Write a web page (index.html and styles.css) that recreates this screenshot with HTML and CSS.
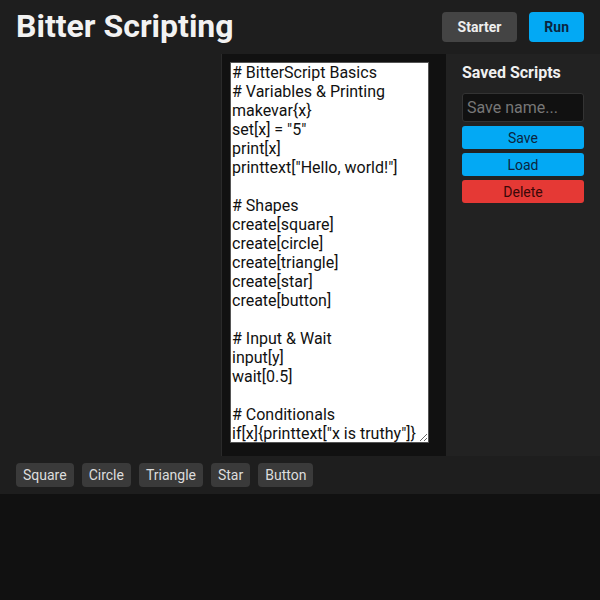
FILE: index.html
```html
<!DOCTYPE html>
<html>
<head>
<meta charset="utf-8">
<link rel="stylesheet" href="styles.css">
</head>
<body>
<header class="topbar">
  <h1 class="title">Bitter Scripting</h1>
  <div class="actions">
    <button class="btn btn-gray">Starter</button>
    <button class="btn btn-blue">Run</button>
  </div>
</header>
<main class="main">
  <section class="canvas"></section>
  <section class="editor">
<textarea class="code" spellcheck="false"># BitterScript Basics
# Variables &amp; Printing
makevar{x}
set[x] = "5"
print[x]
printtext["Hello, world!"]

# Shapes
create[square]
create[circle]
create[triangle]
create[star]
create[button]

# Input &amp; Wait
input[y]
wait[0.5]

# Conditionals
if[x]{printtext["x is truthy"]}</textarea>
  </section>
  <aside class="sidebar">
    <h2 class="side-title">Saved Scripts</h2>
    <input class="name-input" type="text" placeholder="Save name...">
    <button class="sbtn sbtn-blue">Save</button>
    <button class="sbtn sbtn-blue">Load</button>
    <button class="sbtn sbtn-red">Delete</button>
  </aside>
</main>
<nav class="toolbar">
  <button class="tbtn">Square</button>
  <button class="tbtn">Circle</button>
  <button class="tbtn">Triangle</button>
  <button class="tbtn">Star</button>
  <button class="tbtn">Button</button>
</nav>
<section class="output"></section>
</body>
</html>
```
FILE: styles.css
```css
* { box-sizing: border-box; }
html, body { height: 100%; }
body {
  margin: 0;
  background: #111;
  font-family: Roboto, "Liberation Sans", sans-serif;
  color: #eee;
  display: flex;
  flex-direction: column;
}
.topbar {
  height: 54px;
  background: #1e1e1e;
  display: flex;
  align-items: center;
  justify-content: space-between;
  padding: 0 16px;
}
.title {
  margin: 0;
  font-size: 32px;
  font-weight: 700;
  color: #f2f2f2;
  position: relative;
  top: -1px;
}
.actions { display: flex; gap: 12px; }
.btn {
  border: none;
  border-radius: 4px;
  font-family: inherit;
  font-size: 14px;
  font-weight: 700;
  height: 30px;
  padding: 0 16px;
  position: relative;
  top: 0px;
}
.btn-gray { background: #444; color: #eee; }
.btn-blue { background: #03a9f4; color: #0b2540; padding: 0 15px; }
.main {
  height: 402px;
  display: flex;
}
.canvas {
  width: 222px;
  background: #1e1e1e;
  border-right: 1px solid #2a2a2a;
}
.editor {
  width: 224px;
  background: #111;
  padding: 8px 8px 0 8px;
}
.code {
  display: block;
  width: 199px;
  height: 381px;
  margin: 0;
  padding: 0 1px;
  border: 1px solid #555;
  background: #fff;
  color: #111;
  font-family: Roboto, "Liberation Sans", sans-serif;
  font-size: 16px;
  line-height: 19px;
  white-space: pre;
  overflow: hidden;
  resize: both;
  outline: none;
}
.sidebar {
  flex: 1;
  background: #222;
  padding: 9px 16px 0 16px;
  display: flex;
  flex-direction: column;
}
.side-title {
  margin: 0 0 11px 0;
  font-size: 16px;
  font-weight: 700;
  color: #f0f0f0;
  line-height: 19px;
}
.name-input {
  height: 29px;
  width: 100%;
  background: #111;
  border: 1px solid #333;
  border-radius: 3px;
  color: #ddd;
  font-family: inherit;
  font-size: 16px;
  padding: 0 4px;
  margin-bottom: 4px;
}
.name-input::placeholder { color: #777; }
.sbtn {
  height: 23px;
  width: 100%;
  border: none;
  border-radius: 3px;
  font-family: inherit;
  font-size: 14px;
  margin-bottom: 4px;
  padding: 0;
}
.sbtn-blue { background: #03a9f4; color: #0b2540; }
.sbtn-red { background: #e53935; color: #3a0808; }
.toolbar {
  height: 38px;
  background: #1e1e1e;
  display: flex;
  align-items: center;
  gap: 8px;
  padding: 0 16px;
}
.tbtn {
  height: 24px;
  border: none;
  border-radius: 4px;
  background: #3a3a3a;
  color: #ddd;
  font-family: inherit;
  font-size: 14px;
  padding: 0 7px;
}
.output {
  flex: 1;
  background: #111;
}
```
